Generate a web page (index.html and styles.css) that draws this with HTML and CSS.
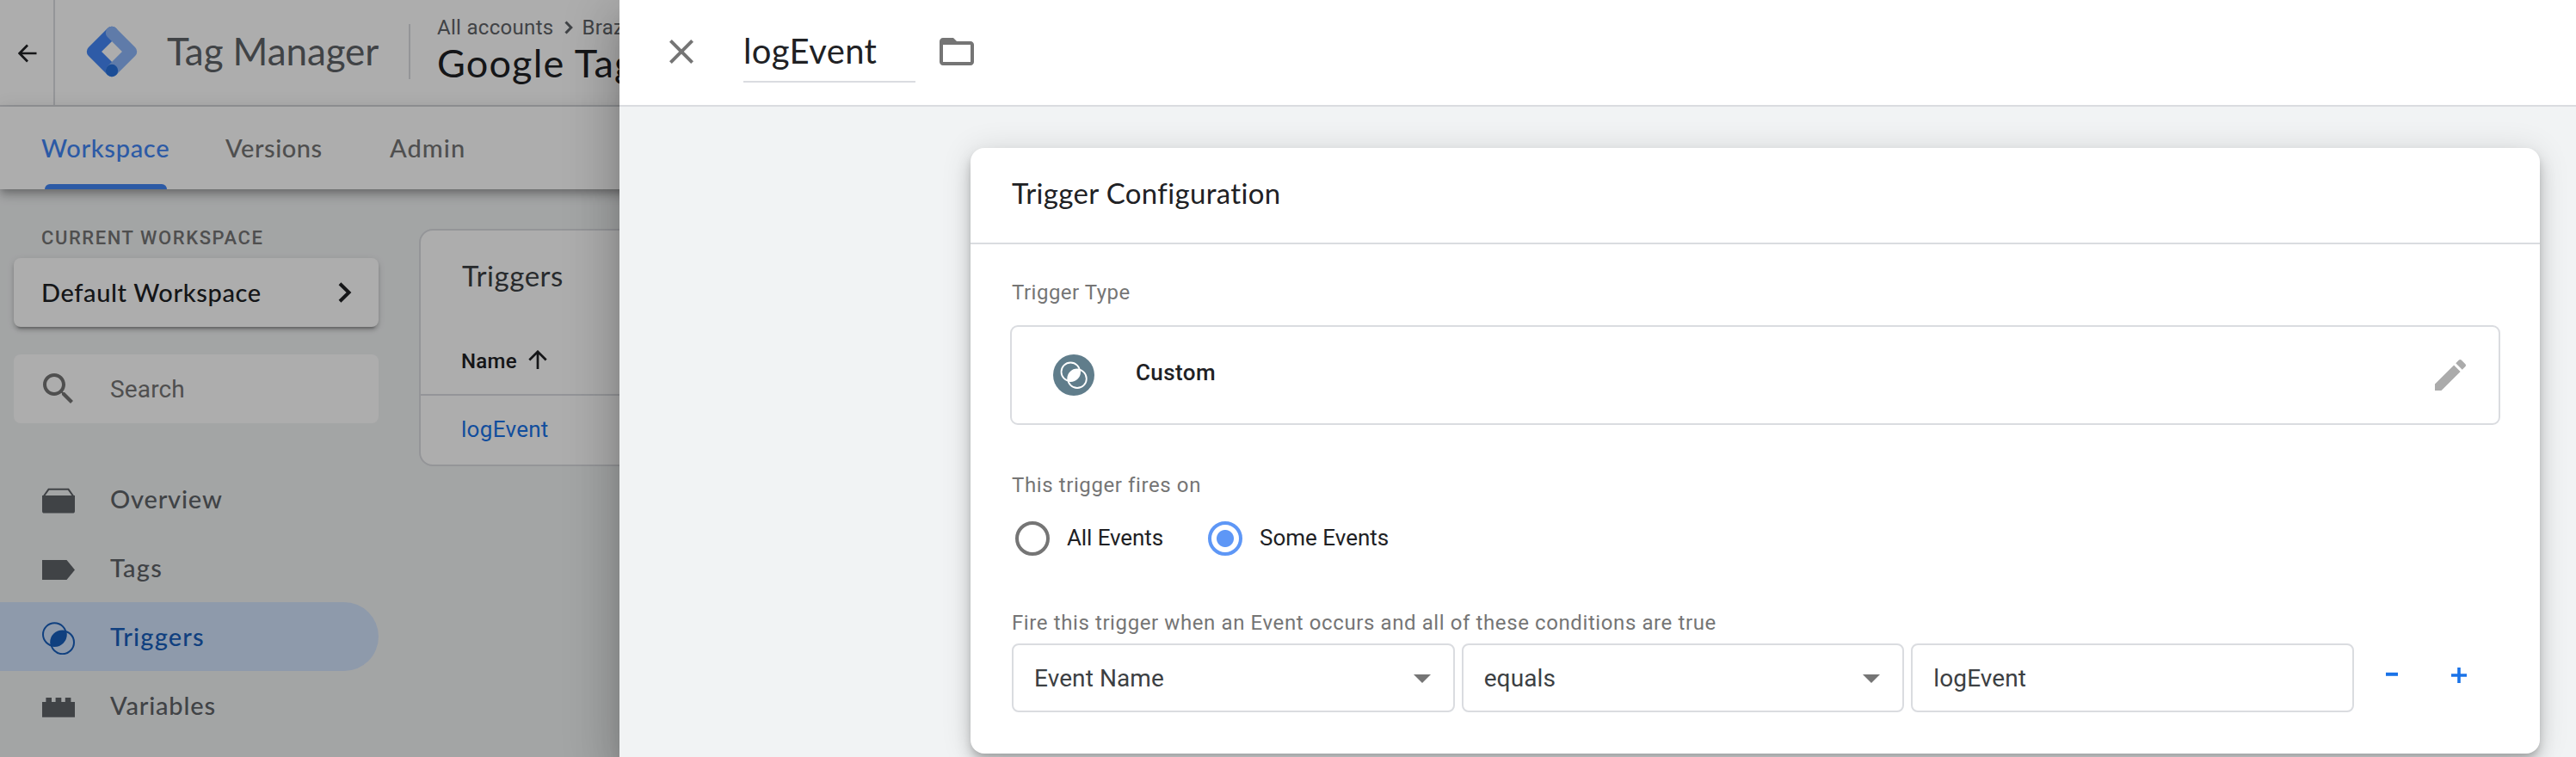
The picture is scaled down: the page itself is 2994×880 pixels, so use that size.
FILE: index.html
```html
<!DOCTYPE html>
<html lang="en">
<head>
<meta charset="utf-8">
<title>Tag Manager</title>
<link rel="stylesheet" href="styles.css">
</head>
<body>
<div class="app">
  <header class="topbar">
    <div class="back">
      <svg width="22" height="22" viewBox="0 0 22 22"><path d="M21.5 11H2M11 1.5L1.7 11L11 20.5" fill="none" stroke="#202124" stroke-width="2.7"/></svg>
    </div>
    <svg class="logo" width="60" height="60" viewBox="0 0 60 60" fill="none" stroke-width="14.4" stroke-linejoin="round" stroke-linecap="round">
      <path d="M30 8L8 30L30 52" stroke="#4587f6"/>
      <path d="M30 8L52 30L30 52" stroke="#8cb6f9"/>
      <circle cx="30" cy="52" r="7.2" fill="#2872dd"/>
    </svg>
    <div class="product">Tag Manager</div>
    <div class="divider"></div>
    <div class="account">
      <div class="crumbs"><span>All accounts</span>
        <svg width="10" height="16" viewBox="0 0 10 16"><path d="M1.5 1.5L7.8 8L1.5 14.5" fill="none" stroke="#5f6368" stroke-width="3"/></svg>
        <span>Braze</span></div>
      <div class="container-name">Google Tag</div>
    </div>
  </header>
  <nav class="tabs">
    <div class="tab tab-active">Workspace</div>
    <div class="tab tab-versions">Versions</div>
    <div class="tab tab-admin">Admin</div>
  </nav>
  <div class="body">
    <aside class="sidebar">
      <div class="ws-label">CURRENT WORKSPACE</div>
      <div class="ws-box"><span>Default Workspace</span>
        <svg width="16" height="24" viewBox="0 0 16 24"><path d="M2 1.8L12.5 12L2 22.2" fill="none" stroke="#202124" stroke-width="4"/></svg>
      </div>
      <div class="search">
        <svg width="48" height="48" viewBox="0 0 24 24" fill="#757575"><path d="M15.5 14h-.79l-.28-.27C15.41 12.59 16 11.11 16 9.5 16 5.91 13.09 3 9.5 3S3 5.91 3 9.5 5.91 16 9.5 16c1.61 0 3.09-.59 4.23-1.57l.27.28v.79l5 4.99L20.49 19l-4.99-5zm-6 0C7.01 14 5 11.99 5 9.5S7.01 5 9.5 5 14 7.01 14 9.5 11.99 14 9.5 14z"/></svg>
        <span>Search</span>
      </div>
      <div class="menu">
        <div class="item">
          <svg width="38" height="42" viewBox="0 0 38 42" fill="#5f6368"><path d="M2 17.5L7.5 9.8H30.5L36 17.5" fill="none" stroke="#5f6368" stroke-width="2"/><path d="M0 17H38V35a2.6 2.6 0 0 1-2.6 2.6H2.6A2.6 2.6 0 0 1 0 35z"/></svg>
          <span class="sp-overview">Overview</span>
        </div>
        <div class="item">
          <svg width="38" height="42" viewBox="0 0 38 42" fill="#5f6368"><path d="M0 12H28.5L38 23.5L28.5 35H0z"/></svg>
          <span class="sp-short">Tags</span>
        </div>
        <div class="item item-active">
          <svg width="38" height="42" viewBox="0 0 38 42"><g fill="none" stroke="#185fbc" stroke-width="2"><circle cx="14.4" cy="18.6" r="13.4"/><circle cx="23.6" cy="27.8" r="13.4"/></g><path d="M10.7 31.5A13.4 13.4 0 0 1 27.3 14.9A13.4 13.4 0 0 1 10.7 31.5z" fill="#185fbc"/></svg>
          <span class="sp-short">Triggers</span>
        </div>
        <div class="item">
          <svg width="38" height="42" viewBox="0 0 38 42" fill="#5f6368"><path d="M0 17H4.4V12H11V17H15.6V12H22.3V17H26.8V12H33.4V17H38V34.7H0z"/></svg>
          <span class="sp-overview">Variables</span>
        </div>
      </div>
    </aside>
    <section class="list">
      <div class="list-title">Triggers</div>
      <div class="list-head"><span>Name</span>
        <svg width="22" height="22" viewBox="0 0 22 22"><path d="M11 22V2M1.3 11.5L11 1.8L20.7 11.5" fill="none" stroke="#202124" stroke-width="2.7"/></svg>
      </div>
      <div class="list-row">logEvent</div>
    </section>
  </div>
</div>
<div class="scrim"></div>
<div class="drawer">
  <header class="drawer-head">
    <svg class="close" width="48" height="48" viewBox="0 0 24 24" fill="#757575"><path d="M19 6.41L17.59 5 12 10.59 6.41 5 5 6.41 10.59 12 5 17.59 6.41 19 12 13.41 17.59 19 19 17.59 13.41 12z"/></svg>
    <div class="name-field">logEvent</div>
    <svg class="folder" width="48" height="48" viewBox="0 0 24 24" fill="#757575"><path d="M20 6h-8l-2-2H4c-1.1 0-1.99.9-1.99 2L2 18c0 1.1.9 2 2 2h16c1.1 0 2-.9 2-2V8c0-1.1-.9-2-2-2zm0 12H4V8h16v10z"/></svg>
  </header>
  <main class="drawer-body">
    <section class="card">
      <div class="card-title">Trigger Configuration</div>
      <div class="card-body">
        <div class="label label-type">Trigger Type</div>
        <div class="type-box">
          <svg width="48" height="48" viewBox="0 0 48 48"><circle cx="24" cy="24" r="24" fill="#607d8b"/><g fill="none" stroke="#fff" stroke-width="1.8"><circle cx="20.3" cy="20.3" r="10.8"/><circle cx="28" cy="28.2" r="10.8"/></g><path d="M17.6 30.8A10.8 10.8 0 0 1 30.7 17.7A10.8 10.8 0 0 1 17.6 30.8z" fill="#fff"/></svg>
          <span>Custom</span>
          <svg class="pencil" width="48" height="48" viewBox="0 0 24 24" fill="#ababab"><path d="M3 17.25V21h3.75L17.81 9.94l-3.75-3.75L3 17.25zM20.71 7.04c.39-.39.39-1.02 0-1.41l-2.34-2.34c-.39-.39-1.02-.39-1.41 0l-1.83 1.83 3.75 3.75 1.83-1.83z"/></svg>
        </div>
        <div class="label label-fires">This trigger fires on</div>
        <div class="radios">
          <div class="radio"></div><span class="radio-text first">All Events</span>
          <div class="radio checked"></div><span class="radio-text">Some Events</span>
        </div>
        <div class="label label-conditions">Fire this trigger when an Event occurs and all of these conditions are true</div>
        <div class="conditions">
          <div class="fields">
            <div class="field"><span>Event Name</span><i class="caret"></i></div>
            <div class="field"><span>equals</span><i class="caret"></i></div>
            <div class="field"><span>logEvent</span></div>
          </div>
          <svg class="minus" width="14" height="18" viewBox="0 0 14 18"><path d="M0 7.8H14" stroke="#1a73e8" stroke-width="4"/></svg>
          <svg class="plus" width="18" height="18" viewBox="0 0 18 18"><path d="M0 9H18M9 0V18" stroke="#1a73e8" stroke-width="3.6"/></svg>
        </div>
      </div>
    </section>
  </main>
</div>
</body>
</html>
```
FILE: styles.css
```css
* { box-sizing: border-box; }
body {
  margin: 0;
  width: 2994px;
  height: 880px;
  overflow: hidden;
  position: relative;
  background: #f1f3f4;
  font-family: Roboto, sans-serif;
  color: #202124;
}
svg { display: block; flex: none; }
span, .tab, .product, .container-name { white-space: nowrap; }

.app { width: 740px; height: 880px; overflow: hidden; display: flex; flex-direction: column; isolation: isolate; }
.topbar {
  display: flex;
  align-items: center;
  height: 124px;
  flex: none;
  background: #fff;
  border-bottom: 2px solid #dadce0;
}
.back {
  width: 64px;
  height: 122px;
  padding: 2px 0 0 21px;
  display: flex;
  align-items: center;
  flex: none;
  border-right: 2px solid #dadce0;
}
.logo { margin: 0 34px 2px 36px; }
.product {
  width: 281px;
  flex: none;
  font: 400 44px/60px Lato, sans-serif;
  letter-spacing: -0.1px;
  color: #5f6368;
  padding-bottom: 4px;
}
.divider { width: 2px; flex: none; height: 64px; background: #dadce0; margin-bottom: 2px; }
.account { padding-left: 31px; align-self: flex-start; padding-top: 18px; }
.crumbs {
  display: flex;
  align-items: center;
  height: 28px;
  font-size: 24px;
  letter-spacing: 0.3px;
  color: #5f6368;
}
.crumbs svg { margin: 0 10px 0 13px; }
.container-name { font: 400 45px/55px Lato, sans-serif; letter-spacing: 1.2px; }

.tabs {
  position: relative;
  z-index: 1;
  display: flex;
  flex: none;
  height: 96px;
  background: #fff;
  padding-left: 48px;
  font: 500 29px/95px Lato, sans-serif;
  color: #757575;
  box-shadow: 0 4px 8px -2px rgba(0,0,0,.2), 0 8px 10px rgba(0,0,0,.14), 0 2px 20px rgba(0,0,0,.12);
}
.tab { position: relative; }
.tab-active { width: 214px; color: #4285f4; letter-spacing: 0.7px; }
.tab-active::after {
  content: "";
  position: absolute;
  left: 4px;
  bottom: 0;
  width: 142px;
  height: 6px;
  border-radius: 6px 6px 0 0;
  background: #4285f4;
}
.tab-versions { width: 191px; letter-spacing: 0.54px; }
.tab-admin { letter-spacing: 1.05px; }

.body { display: flex; flex: 1; }
.sidebar { width: 487px; flex: none; padding-top: 43px; }
.ws-label {
  height: 27px;
  margin: 0 0 10px 48px;
  font-weight: 500;
  font-size: 22px;
  line-height: 27px;
  letter-spacing: 1.57px;
  color: #757575;
}
.ws-box {
  display: flex;
  align-items: center;
  justify-content: space-between;
  width: 424px;
  height: 80px;
  margin-left: 16px;
  padding: 0 31px 0 32px;
  background: #fff;
  border-radius: 8px;
  font: 500 29px/40px Lato, sans-serif;
  letter-spacing: 0.62px;
  box-shadow: 0 6px 2px -4px rgba(0,0,0,.2), 0 4px 4px rgba(0,0,0,.14), 0 2px 10px rgba(0,0,0,.12);
}
.search {
  display: flex;
  align-items: center;
  width: 424px;
  height: 80px;
  margin: 32px 0 48px 16px;
  padding-left: 28px;
  background: #fff;
  border-radius: 8px;
  font-size: 28px;
  letter-spacing: 0.15px;
  color: #757575;
}
.search span { margin-left: 36px; }
.item {
  display: flex;
  align-items: center;
  width: 440px;
  height: 80px;
  padding-left: 49px;
  border-radius: 0 40px 40px 0;
  color: #5f6368;
  font: 500 29px/40px Lato, sans-serif;
}
.item span { margin-left: 41px; }
.sp-overview { letter-spacing: 0.82px; }
.sp-short { letter-spacing: 1.2px; }
.item-active { background: #d2e3fc; color: #185fbc; }

.list {
  width: 400px;
  height: 276px;
  margin-top: 46px;
  flex: none;
  background: #fff;
  border: 2px solid #dadce0;
  border-radius: 16px;
}
.list-title {
  height: 104px;
  padding-left: 48px;
  font: 400 33px/104px Lato, sans-serif;
  letter-spacing: 0.57px;
  color: #3c4043;
}
.list-head {
  display: flex;
  align-items: center;
  height: 88px;
  padding: 10px 0 0 47px;
  font-weight: 500;
  font-size: 24px;
  letter-spacing: 0.3px;
  border-bottom: 2px solid #dadce0;
}
.list-head svg { margin: 0 0 4px 13px; }
.list-row { padding-left: 47px; font-size: 26px; line-height: 78px; letter-spacing: 0.3px; color: #1a73e8; }

.scrim { position: absolute; inset: 0; background: rgba(0,0,0,.32); }

.drawer {
  position: absolute;
  top: 0;
  left: 720px;
  width: 2274px;
  height: 880px;
  background: #f1f3f4;
  box-shadow: 0 16px 20px -10px rgba(0,0,0,.2), 0 32px 48px 4px rgba(0,0,0,.14), 0 12px 60px 10px rgba(0,0,0,.12);
}
.drawer-head {
  display: flex;
  align-items: flex-start;
  height: 124px;
  padding: 35px 0 0 48px;
  background: #fff;
  border-bottom: 2px solid #dadce0;
}
.close { margin-top: 1px; }
.folder { margin: 1px 0 0 24px; }
.name-field {
  width: 200px;
  height: 61px;
  margin-left: 48px;
  font: 400 40px/49px Lato, sans-serif;
  letter-spacing: 0.4px;
  border-bottom: 2px solid #dadce0;
}
.drawer-body { padding: 48px 42px 0 408px; }
.card {
  height: 704px;
  background: #fff;
  border-radius: 16px;
  box-shadow: 0 6px 10px -2px rgba(0,0,0,.2), 0 12px 20px rgba(0,0,0,.14), 0 2px 36px rgba(0,0,0,.12);
}
.card-title {
  height: 112px;
  padding-left: 48px;
  font: 400 33px/104px Lato, sans-serif;
  letter-spacing: 0.34px;
  border-bottom: 2px solid #dadce0;
}
.card-body { padding: 42px 46px 0; }
.label { margin-left: 2px; font-size: 24px; line-height: 28px; color: #757575; letter-spacing: 0.6px; }
.label-type { letter-spacing: 0.5px; }
.type-box {
  display: flex;
  align-items: center;
  height: 116px;
  margin: 24px 0 56px;
  padding: 0 32px 0 48px;
  border: 2px solid #dadce0;
  border-radius: 9px;
  font-size: 26px;
  font-weight: 500;
  letter-spacing: 0.4px;
}
.type-box span { margin-left: 48px; padding-bottom: 6px; }
.pencil { margin-left: auto; }
.radios { display: flex; align-items: center; height: 40px; margin: 28px 0 64px 6px; }
.radio { width: 40px; height: 40px; border: 4px solid #757575; border-radius: 50%; }
.radio.checked { border-color: #5e97f6; background: radial-gradient(circle, #5e97f6 9.5px, #fff 10.5px); }
.radio-text { margin-left: 20px; padding-bottom: 2px; font-size: 26px; }
.radio-text.first { width: 164px; letter-spacing: -0.1px; }
.conditions { display: flex; margin-top: 10px; }
.fields { display: flex; gap: 8px; width: 1560px; margin-left: 2px; }
.field {
  flex: 1 1 0;
  min-width: 0;
  display: flex;
  align-items: center;
  justify-content: space-between;
  height: 80px;
  padding: 0 26px 0 24px;
  border: 2px solid #dadce0;
  border-radius: 8px;
  font-size: 28px;
  letter-spacing: 0.1px;
  color: #3c4043;
}
.caret { border: 10px solid transparent; border-top-color: #757575; border-bottom: 0; margin-top: 2px; }
.minus { margin: 28px 0 0 37px; }
.plus { margin: 28px 0 0 62px; }
```
